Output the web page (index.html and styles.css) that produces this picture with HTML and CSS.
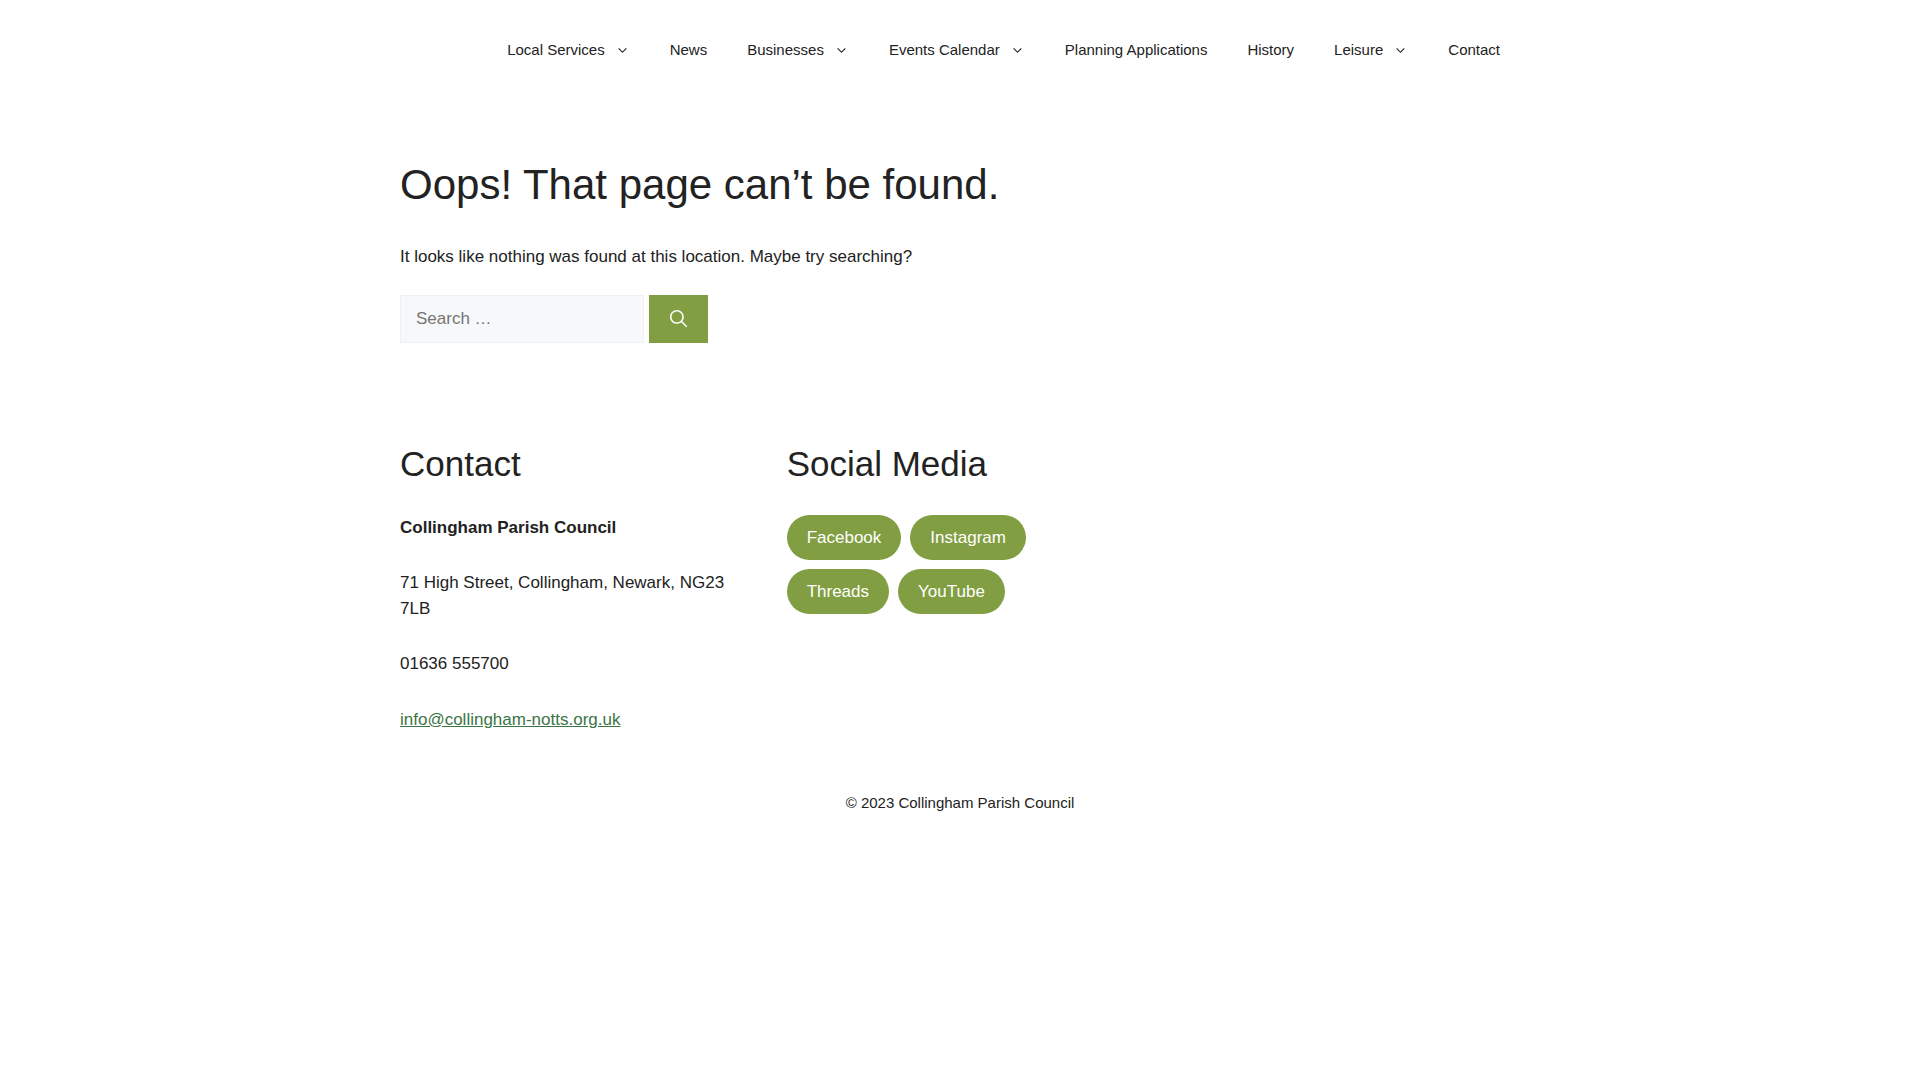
FILE: index.html
```html
<!DOCTYPE html>
<html lang="en-GB">
<head>
  <meta charset="UTF-8">
  <meta name="viewport" content="width=device-width, initial-scale=1">
  <title>Page not found - Collingham Parish Council</title>
  <link rel="stylesheet" href="styles.css">
</head>
<body>
  <svg class="icon-defs" aria-hidden="true">
    <symbol id="arrow" viewBox="0 0 330 512">
      <path d="M305.913 197.085c0 2.266-1.133 4.815-2.833 6.514L171.087 335.593c-1.7 1.7-4.249 2.832-6.515 2.832s-4.815-1.133-6.515-2.832L26.064 203.599c-1.7-1.7-2.832-4.248-2.832-6.514s1.132-4.816 2.832-6.515l14.162-14.163c1.7-1.699 3.966-2.832 6.515-2.832 2.266 0 4.815 1.133 6.515 2.832l111.316 111.317 111.316-111.317c1.7-1.699 4.249-2.832 6.515-2.832s4.815 1.133 6.515 2.832l14.162 14.163c1.7 1.7 2.833 4.249 2.833 6.514z"/>
    </symbol>
  </svg>

  <header class="site-header">
    <nav class="main-nav container" aria-label="Primary">
      <ul>
        <li><a href="#">Local Services<svg class="icon"><use href="#arrow"/></svg></a></li>
        <li><a href="#">News</a></li>
        <li><a href="#">Businesses<svg class="icon"><use href="#arrow"/></svg></a></li>
        <li><a href="#">Events Calendar<svg class="icon"><use href="#arrow"/></svg></a></li>
        <li><a href="#">Planning Applications</a></li>
        <li><a href="#">History</a></li>
        <li><a href="#">Leisure<svg class="icon"><use href="#arrow"/></svg></a></li>
        <li><a href="#">Contact</a></li>
      </ul>
    </nav>
  </header>

  <main class="site-main container">
    <h1>Oops! That page can’t be found.</h1>
    <div class="page-content">
      <p>It looks like nothing was found at this location. Maybe try searching?</p>
      <form class="search-form" role="search">
        <input class="search-field" type="search" name="s" placeholder="Search …" aria-label="Search for:">
        <button class="search-submit" type="submit" aria-label="Search">
          <svg viewBox="0 0 512 512" aria-hidden="true">
            <path fill-rule="evenodd" clip-rule="evenodd" d="M208 48c-88.366 0-160 71.634-160 160s71.634 160 160 160 160-71.634 160-160S296.366 48 208 48zM0 208C0 93.125 93.125 0 208 0s208 93.125 208 208c0 48.741-16.765 93.566-44.843 129.024l133.826 134.018c9.366 9.379 9.355 24.575-.025 33.941-9.379 9.366-24.575 9.355-33.941-.025L337.238 370.987C301.747 399.167 256.839 416 208 416 93.125 416 0 322.875 0 208z"/>
          </svg>
        </button>
      </form>
    </div>
  </main>

  <footer class="site-footer">
    <div class="footer-widgets container">
      <section class="widget">
        <h2>Contact</h2>
        <p><strong>Collingham Parish Council</strong></p>
        <p>71 High Street, Collingham, Newark, NG23 7LB</p>
        <p>01636 555700</p>
        <p><a href="mailto:info@collingham-notts.org.uk">info@collingham-notts.org.uk</a></p>
      </section>
      <section class="widget">
        <h2>Social Media</h2>
        <div class="buttons">
          <a class="button" href="#">Facebook</a>
          <a class="button" href="#">Instagram</a>
          <a class="button" href="#">Threads</a>
          <a class="button" href="#">YouTube</a>
        </div>
      </section>
    </div>
    <div class="site-info">© 2023 Collingham Parish Council</div>
  </footer>
</body>
</html>
```
FILE: styles.css
```css
* {
  box-sizing: border-box;
}

body {
  margin: 0;
  background: #fff;
  color: #222;
  font-family: "Liberation Sans", Arial, sans-serif;
  font-size: 17px;
  line-height: 1.5;
}

h1, h2, p, ul {
  margin: 0;
  padding: 0;
}

h1, h2 {
  font-weight: 400;
  line-height: 1.2;
}

h1 {
  font-size: 42px;
}

h2 {
  font-size: 35px;
}

a {
  color: #3b7545;
}

.icon-defs {
  display: none;
}

.container {
  max-width: 1200px;
  margin: 0 auto;
  padding: 0 40px;
}

/* header */
.site-header {
  padding: 20px 0;
}

.main-nav ul {
  display: flex;
  flex-wrap: wrap;
  justify-content: flex-end;
  list-style: none;
}

.main-nav a {
  display: flex;
  align-items: center;
  padding: 0 20px;
  color: #222;
  font-size: 15px;
  line-height: 60px;
  text-decoration: none;
}

.main-nav .icon {
  width: 15px;
  height: 15px;
  margin-left: 10px;
  fill: currentColor;
}

/* content */
.site-main {
  padding-top: 60px;
  padding-bottom: 60px;
}

.page-content {
  margin-top: 34px;
}

.search-form {
  display: flex;
  gap: 5px;
  margin-top: 25px;
}

.search-field {
  width: 244px;
  min-height: 48px;
  padding: 10px 15px;
  border: 1px solid #eff0f1;
  border-radius: 0;
  background: #f7f8f9;
  color: #222;
  font: inherit;
  -webkit-appearance: none;
  appearance: none;
}

.search-submit {
  display: flex;
  align-items: center;
  padding: 10px 20px;
  border: 1px solid #819e42;
  background: #819e42;
  color: #fff;
  cursor: pointer;
}

.search-submit svg {
  width: 17px;
  height: 17px;
  fill: currentColor;
}

/* footer */
.footer-widgets {
  display: grid;
  grid-template-columns: repeat(3, 1fr);
  gap: 40px;
  padding-top: 40px;
  padding-bottom: 40px;
}

.widget h2,
.widget p:not(:last-child) {
  margin-bottom: 30px;
}

.buttons {
  display: flex;
  flex-wrap: wrap;
  gap: 9px;
}

.button {
  padding: 10px 20px;
  border-radius: 25px;
  background: #819e42;
  color: #fff;
  line-height: 25px;
  text-decoration: none;
}

.site-info {
  padding: 20px;
  font-size: 15px;
  text-align: center;
}

@media (max-width: 768px) {
  .footer-widgets {
    grid-template-columns: 1fr;
  }
}
```
